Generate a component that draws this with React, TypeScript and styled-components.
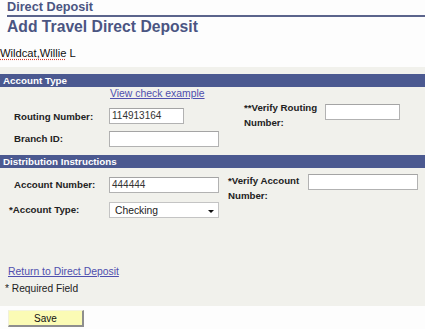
import React from 'react';
import styled, { createGlobalStyle } from 'styled-components';

const Global = createGlobalStyle`
  html, body { margin: 0; padding: 0; background: #fdfdfd; }
  body { font-family: "Liberation Sans", Arial, sans-serif; }
  * { box-sizing: border-box; }
`;

const Page = styled.div`
  width: 425px;
  height: 329px;
  overflow: hidden;
  display: flex;
  flex-direction: column;
`;

const Header = styled.header`
  padding: 1px 0 0 7px;
`;

const PageTitle = styled.h1`
  margin: 0;
  font-size: 12.7px;
  line-height: 13px;
  font-weight: bold;
  color: #4b5582;
  padding-bottom: 1px;
  border-bottom: 2px solid #5b648c;
`;

const SubTitle = styled.h2`
  margin: 1px 0 0;
  font-size: 15.7px;
  line-height: 17px;
  font-weight: bold;
  color: #4b5582;
`;

const Name = styled.div`
  margin-top: 12px;
  font-size: 11.2px;
  line-height: 12px;
  color: #111;
`;

const Misspelled = styled.span`
  text-decoration: underline dotted #d23a2a;
  text-underline-offset: 2px;
`;

const Panel = styled.main`
  margin-top: 8px;
  height: 239px;
  background: #f1f1ec;
  padding-top: 7px;
  display: flex;
  flex-direction: column;
  font-size: 9.7px;
`;

const SectionBar = styled.div<{ $mt?: number }>`
  margin-top: ${p => p.$mt ?? 0}px;
  height: 13px;
  line-height: 13px;
  padding-left: 3px;
  background: #4b5990;
  color: #fff;
  font-weight: bold;
  font-size: 9.8px;
`;

const LinkRow = styled.div`
  margin-top: 1px;
  padding-left: 110px;
  line-height: 12px;
`;

const Link = styled.a`
  color: #4f4fae;
  font-size: 10.4px;
  text-decoration: underline;
  cursor: pointer;
`;

const Row = styled.div<{ $mt?: number; $h?: number; $center?: boolean }>`
  display: flex;
  align-items: ${p => (p.$center ? 'center' : 'flex-start')};
  margin-top: ${p => p.$mt ?? 0}px;
  height: ${p => (p.$h ? `${p.$h}px` : 'auto')};
`;

const Label = styled.label<{ $w: number; $pl?: number; $mt?: number; $ml?: number; $lh?: number }>`
  width: ${p => p.$w}px;
  padding-left: ${p => p.$pl ?? 0}px;
  margin-top: ${p => p.$mt ?? 0}px;
  margin-left: ${p => p.$ml ?? 0}px;
  line-height: ${p => p.$lh ?? 16}px;
  font-weight: bold;
  color: #222;
  flex-shrink: 0;
`;

const Input = styled.div<{ $w: number; $mt?: number }>`
  width: ${p => p.$w}px;
  height: 16px;
  margin-top: ${p => p.$mt ?? 0}px;
  flex-shrink: 0;
  background: #fff;
  border: 1px solid #b2b2b2;
  border-top-color: #a4a4a4;
  padding: 0 0 0 2px;
  line-height: 13px;
  color: #333;
  font-size: 10px;
`;

const Select = styled.div<{ $w: number }>`
  width: ${p => p.$w}px;
  height: 16px;
  flex-shrink: 0;
  background: #fff;
  border: 1px solid #c4c4c4;
  display: flex;
  align-items: center;
  justify-content: space-between;
  padding: 0 4px 0 5px;
  color: #222;
  font-size: 10.3px;
`;

const Arrow = styled.span`
  width: 0;
  height: 0;
  border-left: 3px solid transparent;
  border-right: 3px solid transparent;
  border-top: 3px solid #111;
  margin-top: 2px;
`;

const Footer = styled.div`
  margin-top: auto;
  padding-bottom: 11px;
  display: flex;
  flex-direction: column;
  gap: 5px;
`;

const FooterLink = styled.div`
  padding-left: 8px;
  line-height: 12px;
`;

const Note = styled.div`
  padding-left: 5px;
  line-height: 12px;
  font-size: 10.2px;
  color: #222;
`;

const SaveButton = styled.button`
  margin: 4px 0 0 8px;
  width: 76px;
  height: 17px;
  padding: 0;
  background: #fbfbb5;
  border-top: 1px solid #f4f4dc;
  border-left: 1px solid #f0f0da;
  border-right: 2px solid #8e8e8e;
  border-bottom: 2px solid #8e8e8e;
  font-family: "Liberation Sans", Arial, sans-serif;
  font-size: 10px;
  color: #111;
  line-height: 13px;
`;

export default function App() {
  return (
    <Page>
      <Global />
      <Header>
        <PageTitle>Direct Deposit</PageTitle>
        <SubTitle>Add Travel Direct Deposit</SubTitle>
      </Header>
      <Name>
        <Misspelled>Wildcat,Willie</Misspelled> L
      </Name>
      <Panel>
        <SectionBar>Account Type</SectionBar>
        <LinkRow>
          <Link>View check example</Link>
        </LinkRow>
        <Row $h={30}>
          <Label $w={109} $pl={14} $mt={9}>Routing Number:</Label>
          <Input $w={75} $mt={8}>114913164</Input>
          <Label $w={81} $ml={60} $lh={15}>
            **Verify Routing
            <br />
            Number:
          </Label>
          <Input $w={75} $mt={4} />
        </Row>
        <Row $mt={1} $center>
          <Label $w={109} $pl={14}>Branch ID:</Label>
          <Input $w={110} />
        </Row>
        <SectionBar $mt={8}>Distribution Instructions</SectionBar>
        <Row $mt={4} $h={30}>
          <Label $w={109} $pl={14} $mt={5}>Account Number:</Label>
          <Input $w={110} $mt={5}>444444</Input>
          <Label $w={80} $ml={9} $lh={15} $mt={1}>
            *Verify Account
            <br />
            Number:
          </Label>
          <Input $w={110} $mt={2} />
        </Row>
        <Row $center>
          <Label $w={109} $pl={9}>*Account Type:</Label>
          <Select $w={110}>
            <span>Checking</span>
            <Arrow />
          </Select>
        </Row>
        <Footer>
          <FooterLink>
            <Link>Return to Direct Deposit</Link>
          </FooterLink>
          <Note>* Required Field</Note>
        </Footer>
      </Panel>
      <div>
        <SaveButton>Save</SaveButton>
      </div>
    </Page>
  );
}
